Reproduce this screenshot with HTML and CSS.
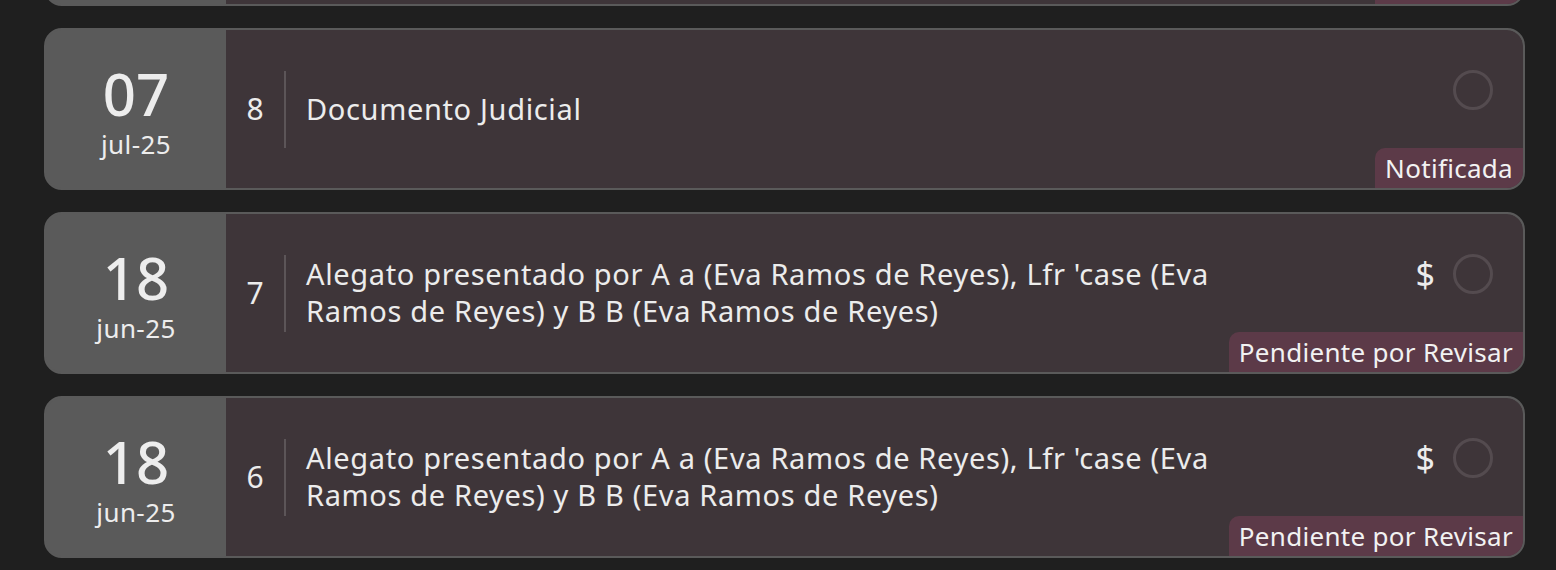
FILE: index.html
```html
<!DOCTYPE html>
<html lang="es">
<head>
<meta charset="utf-8">
<title>Actuaciones</title>
<link rel="stylesheet" href="styles.css">
</head>
<body>
<div class="viewport">
  <div class="list">
    <div class="card">
      <div class="date"><div class="day">08</div><div class="month">jul-25</div></div>
      <div class="content">
        <div class="num">9</div>
        <div class="sep"></div>
        <div class="title">Documento Judicial</div>
        <div class="actions"><span class="check"></span></div>
        <div class="badge">Notificada</div>
      </div>
    </div>
    <div class="card">
      <div class="date"><div class="day">07</div><div class="month">jul-25</div></div>
      <div class="content">
        <div class="num">8</div>
        <div class="sep"></div>
        <div class="title">Documento Judicial</div>
        <div class="actions"><span class="check"></span></div>
        <div class="badge">Notificada</div>
      </div>
    </div>
    <div class="card">
      <div class="date"><div class="day">18</div><div class="month">jun-25</div></div>
      <div class="content">
        <div class="num">7</div>
        <div class="sep"></div>
        <div class="title">Alegato presentado por A a (Eva Ramos de Reyes), Lfr 'case (Eva Ramos de Reyes) y B B (Eva Ramos de Reyes)</div>
        <div class="actions"><span class="dollar">$</span><span class="check"></span></div>
        <div class="badge">Pendiente por Revisar</div>
      </div>
    </div>
    <div class="card">
      <div class="date"><div class="day">18</div><div class="month">jun-25</div></div>
      <div class="content">
        <div class="num">6</div>
        <div class="sep"></div>
        <div class="title">Alegato presentado por A a (Eva Ramos de Reyes), Lfr 'case (Eva Ramos de Reyes) y B B (Eva Ramos de Reyes)</div>
        <div class="actions"><span class="dollar">$</span><span class="check"></span></div>
        <div class="badge">Pendiente por Revisar</div>
      </div>
    </div>
  </div>
</div>
</body>
</html>
```

FILE: styles.css
```css
html, body {
  margin: 0;
  padding: 0;
  background: #1f1f1f;
  height: 100%;
  overflow: hidden;
}
body {
  font-family: "Noto Sans", "DejaVu Sans", sans-serif;
  color: #ececec;
}
.viewport {
  height: 570px;
  overflow: hidden;
}
.list {
  display: flex;
  flex-direction: column;
  gap: 22px;
  margin: -156px 31px 0 44px;
}
.card {
  height: 162px;
  box-sizing: border-box;
  border: 2px solid #5a5a5a;
  border-radius: 18px;
  background: #5a5a5a;
  overflow: hidden;
  display: flex;
}
.date {
  width: 180px;
  flex: none;
  display: flex;
  flex-direction: column;
  align-items: center;
  justify-content: center;
  padding-top: 6px;
  box-sizing: border-box;
}
.day {
  font-size: 58px;
  font-weight: 500;
  line-height: 58px;
  color: #ededed;
}
.month {
  font-size: 26px;
  line-height: 30px;
  letter-spacing: 0.4px;
  margin-top: 6px;
  color: #ededed;
}
.content {
  flex: 1;
  position: relative;
  background: #3e3539;
  border-radius: 0 16px 16px 0;
  display: flex;
  align-items: center;
  padding-left: 20px;
}
.num {
  font-size: 30px;
  width: 18px;
  text-align: center;
  margin-right: 20px;
  padding-bottom: 2px;
}
.sep {
  width: 2px;
  height: 77px;
  background: #5c5558;
  flex: none;
  margin-right: 20px;
}
.title {
  font-size: 29px;
  line-height: 37px;
  letter-spacing: 0.65px;
  width: 940px;
  padding-bottom: 2px;
}
.actions {
  position: absolute;
  top: 40px;
  right: 30px;
  display: flex;
  align-items: center;
  gap: 18px;
}
.dollar {
  font-size: 34px;
  line-height: 40px;
  color: #ececec;
}
.check {
  width: 40px;
  height: 40px;
  box-sizing: border-box;
  border: 3px solid #544b4f;
  border-radius: 50%;
}
.badge {
  position: absolute;
  right: 0;
  bottom: 0;
  height: 40px;
  line-height: 40px;
  padding: 0 10px;
  background: #5c3a48;
  border-top-left-radius: 10px;
  font-size: 26px;
  letter-spacing: 0.3px;
  color: #f2f2f2;
}
```
